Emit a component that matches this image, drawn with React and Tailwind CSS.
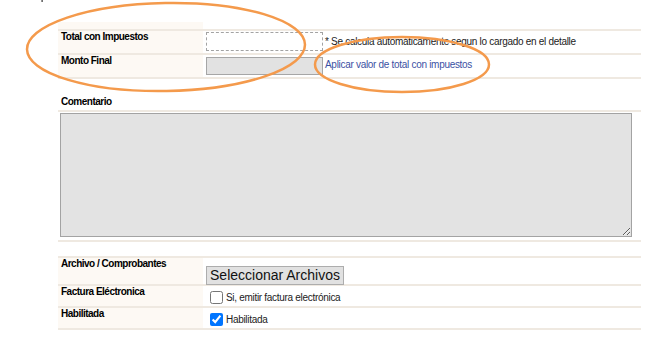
import React from "react";

const Line = () => <div className="h-[2px] bg-[#efe9e1]" />;

function Label({ children, cream = true, className = "" }) {
    return (
        <div
            className={`w-[145px] shrink-0 pl-[3px] text-[10px] leading-[12px] font-bold tracking-[-0.5px] text-black ${
                cream ? "bg-[#fdf9f4]" : ""
            } ${className}`}
        >
            {children}
        </div>
    );
}

export default function App() {
    return (
        <div className="relative w-[664px] h-[354px] overflow-hidden bg-white font-['Liberation_Sans',Arial,sans-serif]">
            <div className="ml-[58px] w-[583px] pt-[22px]">
                {/* end of previous row */}
                <div className="flex h-[7px]">
                    <div className="w-[145px] bg-[#fdf9f4]" />
                </div>
                <Line />

                <div className="flex h-[22px]">
                    <Label>Total con Impuestos</Label>
                    <div className="flex items-start pl-[3px]">
                        <div className="mt-[1px] h-[19px] w-[117px] border border-dashed border-[#a3a3a3] bg-white" />
                        <span className="ml-[2px] mt-[5px] text-[10px] leading-[12px] tracking-[-0.3px] text-[#222]">
                            * Se calcula automáticamente segun lo cargado en el detalle
                        </span>
                    </div>
                </div>
                <Line />

                <div className="flex h-[22px]">
                    <Label>Monto Final</Label>
                    <div className="flex items-start pl-[3px]">
                        <div className="mt-[2px] h-[18px] w-[117px] border border-[#a6a6a6] bg-[#e2e2e2]" />
                        <a className="ml-[2px] mt-[4px] text-[10px] leading-[12px] tracking-[-0.3px] text-[#3b51a3]">
                            Aplicar valor de total con impuestos
                        </a>
                    </div>
                </div>
                <Line />

                <div className="h-[16px]" />
                <div className="flex h-[15px]">
                    <Label cream={false} className="pt-[1px]">
                        Comentario
                    </Label>
                </div>
                <Line />
                <div className="h-[128px] pt-[1px] pl-[2px]">
                    <textarea
                        disabled
                        className="block h-[124px] w-[572px] border border-[#a3a3a3] bg-[#e3e3e3] resize"
                    />
                </div>
                <Line />

                <div className="h-[14px]" />
                <Line />
                <div className="flex h-[26px]">
                    <Label>Archivo / Comprobantes</Label>
                    <div className="pl-[3px] pt-[5px]">
                        <button className="h-[19px] w-[138px] border border-[#adadad] bg-[#e1e1e1] text-[14px] leading-[17px] text-[#111]">
                            Seleccionar Archivos
                        </button>
                    </div>
                </div>
                <Line />

                <div className="flex h-[20px]">
                    <Label>Factura Eléctronica</Label>
                    <div className="flex items-center pl-[7px] pt-[5px] h-[18px]">
                        <input
                            type="checkbox"
                            className="m-0 h-[13px] w-[13px] accent-[#0075ff]"
                        />
                        <span className="ml-[3px] text-[10px] leading-[12px] tracking-[-0.3px] text-[#222]">
                            Si, emitir factura electrónica
                        </span>
                    </div>
                </div>
                <Line />

                <div className="flex h-[20px]">
                    <Label>Habilitada</Label>
                    <div className="flex items-center pl-[7px] pt-[5px] h-[18px]">
                        <input
                            type="checkbox"
                            defaultChecked
                            className="m-0 h-[13px] w-[13px] accent-[#0075ff]"
                        />
                        <span className="ml-[3px] text-[10px] leading-[12px] tracking-[-0.3px] text-[#222]">
                            Habilitada
                        </span>
                    </div>
                </div>
                <Line />
            </div>

            {/* hand-drawn highlight marks */}
            <svg
                className="pointer-events-none absolute left-0 top-0"
                width="664"
                height="354"
            >
                <rect x="41.5" y="0" width="1.2" height="2" fill="#333" />
                <ellipse
                    cx="166"
                    cy="47"
                    rx="139"
                    ry="44"
                    transform="rotate(-1 166 47)"
                    fill="none"
                    stroke="#f49a4c"
                    strokeWidth="2.5"
                />
                <ellipse
                    cx="402"
                    cy="64.5"
                    rx="87"
                    ry="27.5"
                    fill="none"
                    stroke="#f49a4c"
                    strokeWidth="2.5"
                />
            </svg>
        </div>
    );
}
